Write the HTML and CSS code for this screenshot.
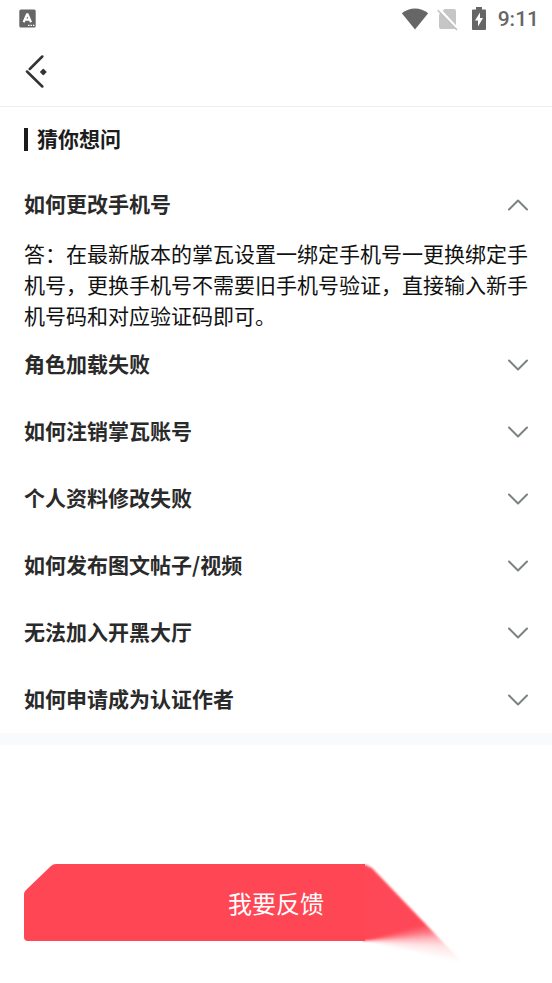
FILE: index.html
```html
<!DOCTYPE html>
<html lang="zh-CN">
<head>
<meta charset="utf-8">
<meta name="viewport" content="width=device-width, initial-scale=1">
<title>猜你想问</title>
<link rel="stylesheet" href="styles.css">
</head>
<body>
<div class="status">
  <svg class="status-app" width="17" height="19" viewBox="0 0 17 19" aria-hidden="true">
    <rect x="0.3" y="0.5" width="16.4" height="18" rx="1.5" fill="#666"/>
    <path d="M4.6 13.2 8 5.4h.6l3.4 7.8M5.8 10.7h5" fill="none" stroke="#fff" stroke-width="2.2"/>
    <path d="M9 16.3h1.6M11.5 16.3h1.6M14 16.3h1.4" stroke="#fff" stroke-width="1.3"/>
  </svg>
  <div class="status-right">
    <svg width="28" height="22" viewBox="0 0 28 22" aria-hidden="true">
      <path d="M.8 5.2C8.5-1.2 19.5-1.2 27.2 5.2L14 21.5z" fill="#666"/>
    </svg>
    <svg class="sim" width="22" height="24" viewBox="0 0 22 24" aria-hidden="true">
      <path d="M7.5 2H17a2 2 0 0 1 2 2v16a2 2 0 0 1-2 2H4a2 2 0 0 1-2-2V7.5z" fill="#c6c6c6"/>
      <path d="M1.8 1.8 21 22.6" stroke="#fff" stroke-width="3"/>
      <path d="M.7 3.2 20 23" stroke="#c0c0c0" stroke-width="1.6"/>
    </svg>
    <svg class="battery" width="14" height="23" viewBox="0 0 14 23" aria-hidden="true">
      <path d="M4 0h6v2.5h3a1 1 0 0 1 1 1V22a1 1 0 0 1-1 1H1a1 1 0 0 1-1-1V3.5a1 1 0 0 1 1-1h3z" fill="#666"/>
      <path d="M8 5.5v5.500h3L6 19.500v-6H3z" fill="#fff"/>
    </svg>
    <span class="clock">9:11</span>
  </div>
</div>
<header class="topbar">
  <button class="back" type="button" aria-label="返回">
    <svg width="24" height="34" viewBox="0 0 24 34" aria-hidden="true">
      <path d="M18.300 1.500 5.800 14M3 16.500 18.300 31.500" fill="none" stroke="#333" stroke-width="2.500" stroke-linecap="round"/>
      <path d="M19.300 14.500 21.800 17 19.300 19.500 16.800 17z" fill="#333" stroke="#333" stroke-width="1.500" stroke-linejoin="round"/>
    </svg>
  </button>
</header>
<main>
  <section class="faq">
    <h1 class="title"><span class="title-text">猜你想问</span></h1>
    <details open>
      <summary><span class="question">如何更改手机号</span><svg class="chevron" viewBox="0 0 22 14" aria-hidden="true"><path d="M2 2.500 11 11.500 20 2.500"/></svg></summary>
      <p class="answer">答：在最新版本的掌瓦设置一绑定手机号一更换绑定手机号，更换手机号不需要旧手机号验证，直接输入新手机号码和对应验证码即可。</p>
    </details>
    <details><summary><span class="question">角色加载失败</span><svg class="chevron" viewBox="0 0 22 14" aria-hidden="true"><path d="M2 2.500 11 11.500 20 2.500"/></svg></summary></details>
    <details><summary><span class="question">如何注销掌瓦账号</span><svg class="chevron" viewBox="0 0 22 14" aria-hidden="true"><path d="M2 2.500 11 11.500 20 2.500"/></svg></summary></details>
    <details><summary><span class="question">个人资料修改失败</span><svg class="chevron" viewBox="0 0 22 14" aria-hidden="true"><path d="M2 2.500 11 11.500 20 2.500"/></svg></summary></details>
    <details><summary><span class="question">如何发布图文帖子/视频</span><svg class="chevron" viewBox="0 0 22 14" aria-hidden="true"><path d="M2 2.500 11 11.500 20 2.500"/></svg></summary></details>
    <details><summary><span class="question">无法加入开黑大厅</span><svg class="chevron" viewBox="0 0 22 14" aria-hidden="true"><path d="M2 2.500 11 11.500 20 2.500"/></svg></summary></details>
    <details><summary><span class="question">如何申请成为认证作者</span><svg class="chevron" viewBox="0 0 22 14" aria-hidden="true"><path d="M2 2.500 11 11.500 20 2.500"/></svg></summary></details>
  </section>
</main>
<footer class="footer">
  <button class="feedback" type="button">
    <span class="flare"><span class="flare-fill"></span></span>
    <svg class="feedback-shape" viewBox="0 0 341 77" preserveAspectRatio="none" aria-hidden="true">
      <path d="M31 0H341V77H4Q0 77 0 73V30Q0 28 2 26L27 2Q29 0 32 0z" fill="#ff4655"/>
    </svg>
    <span class="feedback-label">我要反馈</span>
  </button>
</footer>
</body>
</html>
```
FILE: styles.css
```css
* {
  box-sizing: border-box;
}

body {
  margin: 0;
  min-height: 100vh;
  background: #fff;
  color: #2a2a2a;
  font-family: "Noto Sans CJK SC", sans-serif;
  font-size: 21px;
}

button {
  border: 0;
  padding: 0;
  background: none;
  font: inherit;
  cursor: pointer;
}

svg {
  display: block;
}

.status {
  display: flex;
  align-items: center;
  justify-content: space-between;
  height: 37px;
  padding: 0 13px 0 19px;
}

.status-right {
  display: flex;
  align-items: center;
}

.sim {
  margin-left: 8px;
}

.battery {
  margin-left: 13px;
}

.clock {
  margin-left: 12px;
  color: #666;
  font: 500 21px/24px Roboto, sans-serif;
}

.topbar {
  display: flex;
  align-items: center;
  height: 70px;
  padding: 0 24px;
  border-bottom: 1px solid #eee;
}

.faq {
  border-bottom: 12px solid #f9fafc;
}

.title {
  display: flex;
  align-items: center;
  gap: 9px;
  height: 64px;
  margin: 0;
  padding: 0 24px;
  color: #1c1c1c;
  font-size: 21px;
  font-weight: 700;
}

.title::before {
  content: "";
  width: 4px;
  height: 23px;
  background: #1c1c1c;
}

summary {
  display: flex;
  align-items: center;
  justify-content: space-between;
  height: 67px;
  padding: 0 23px 0 24px;
  font-weight: 700;
  list-style: none;
  cursor: pointer;
}

summary::-webkit-details-marker {
  display: none;
}

.title-text,
.question {
  padding-bottom: 3px;
}

.chevron {
  width: 22px;
  height: 14px;
  fill: none;
  stroke: #7c8283;
  stroke-width: 2;
  stroke-linecap: round;
  stroke-linejoin: round;
}

details[open] .chevron {
  transform: rotate(180deg);
}

.answer {
  margin: 0;
  padding: 0 24px;
  color: #111;
  line-height: 31px;
}

.footer {
  padding: 119px 24px 42px;
}

.feedback {
  position: relative;
  display: block;
  width: 100%;
  height: 77px;
  color: #fff;
  font-size: 24px;
}

.feedback-shape {
  position: absolute;
  top: 0;
  left: 0;
  width: calc(100% - 163px);
  height: 77px;
}

/* Soft spike trailing off the right end of the button */
.flare {
  position: absolute;
  top: 0;
  right: 63px;
  width: 110px;
  height: 105px;
  filter: blur(1px);
}

.flare-fill {
  display: block;
  height: 100%;
  background: conic-gradient(from 0deg at 8px 77px,
    #ff4857 75deg,
    rgba(255, 72, 87, 0.75) 82deg,
    rgba(255, 72, 87, 0.4) 88deg,
    rgba(255, 72, 87, 0.15) 94deg,
    rgba(255, 72, 87, 0) 103deg);
  clip-path: polygon(8px 1px, 11px 1px, 17px 4px, 104px 95px, 104px 105px, 8px 105px);
}

.feedback-label {
  position: relative;
}
```
